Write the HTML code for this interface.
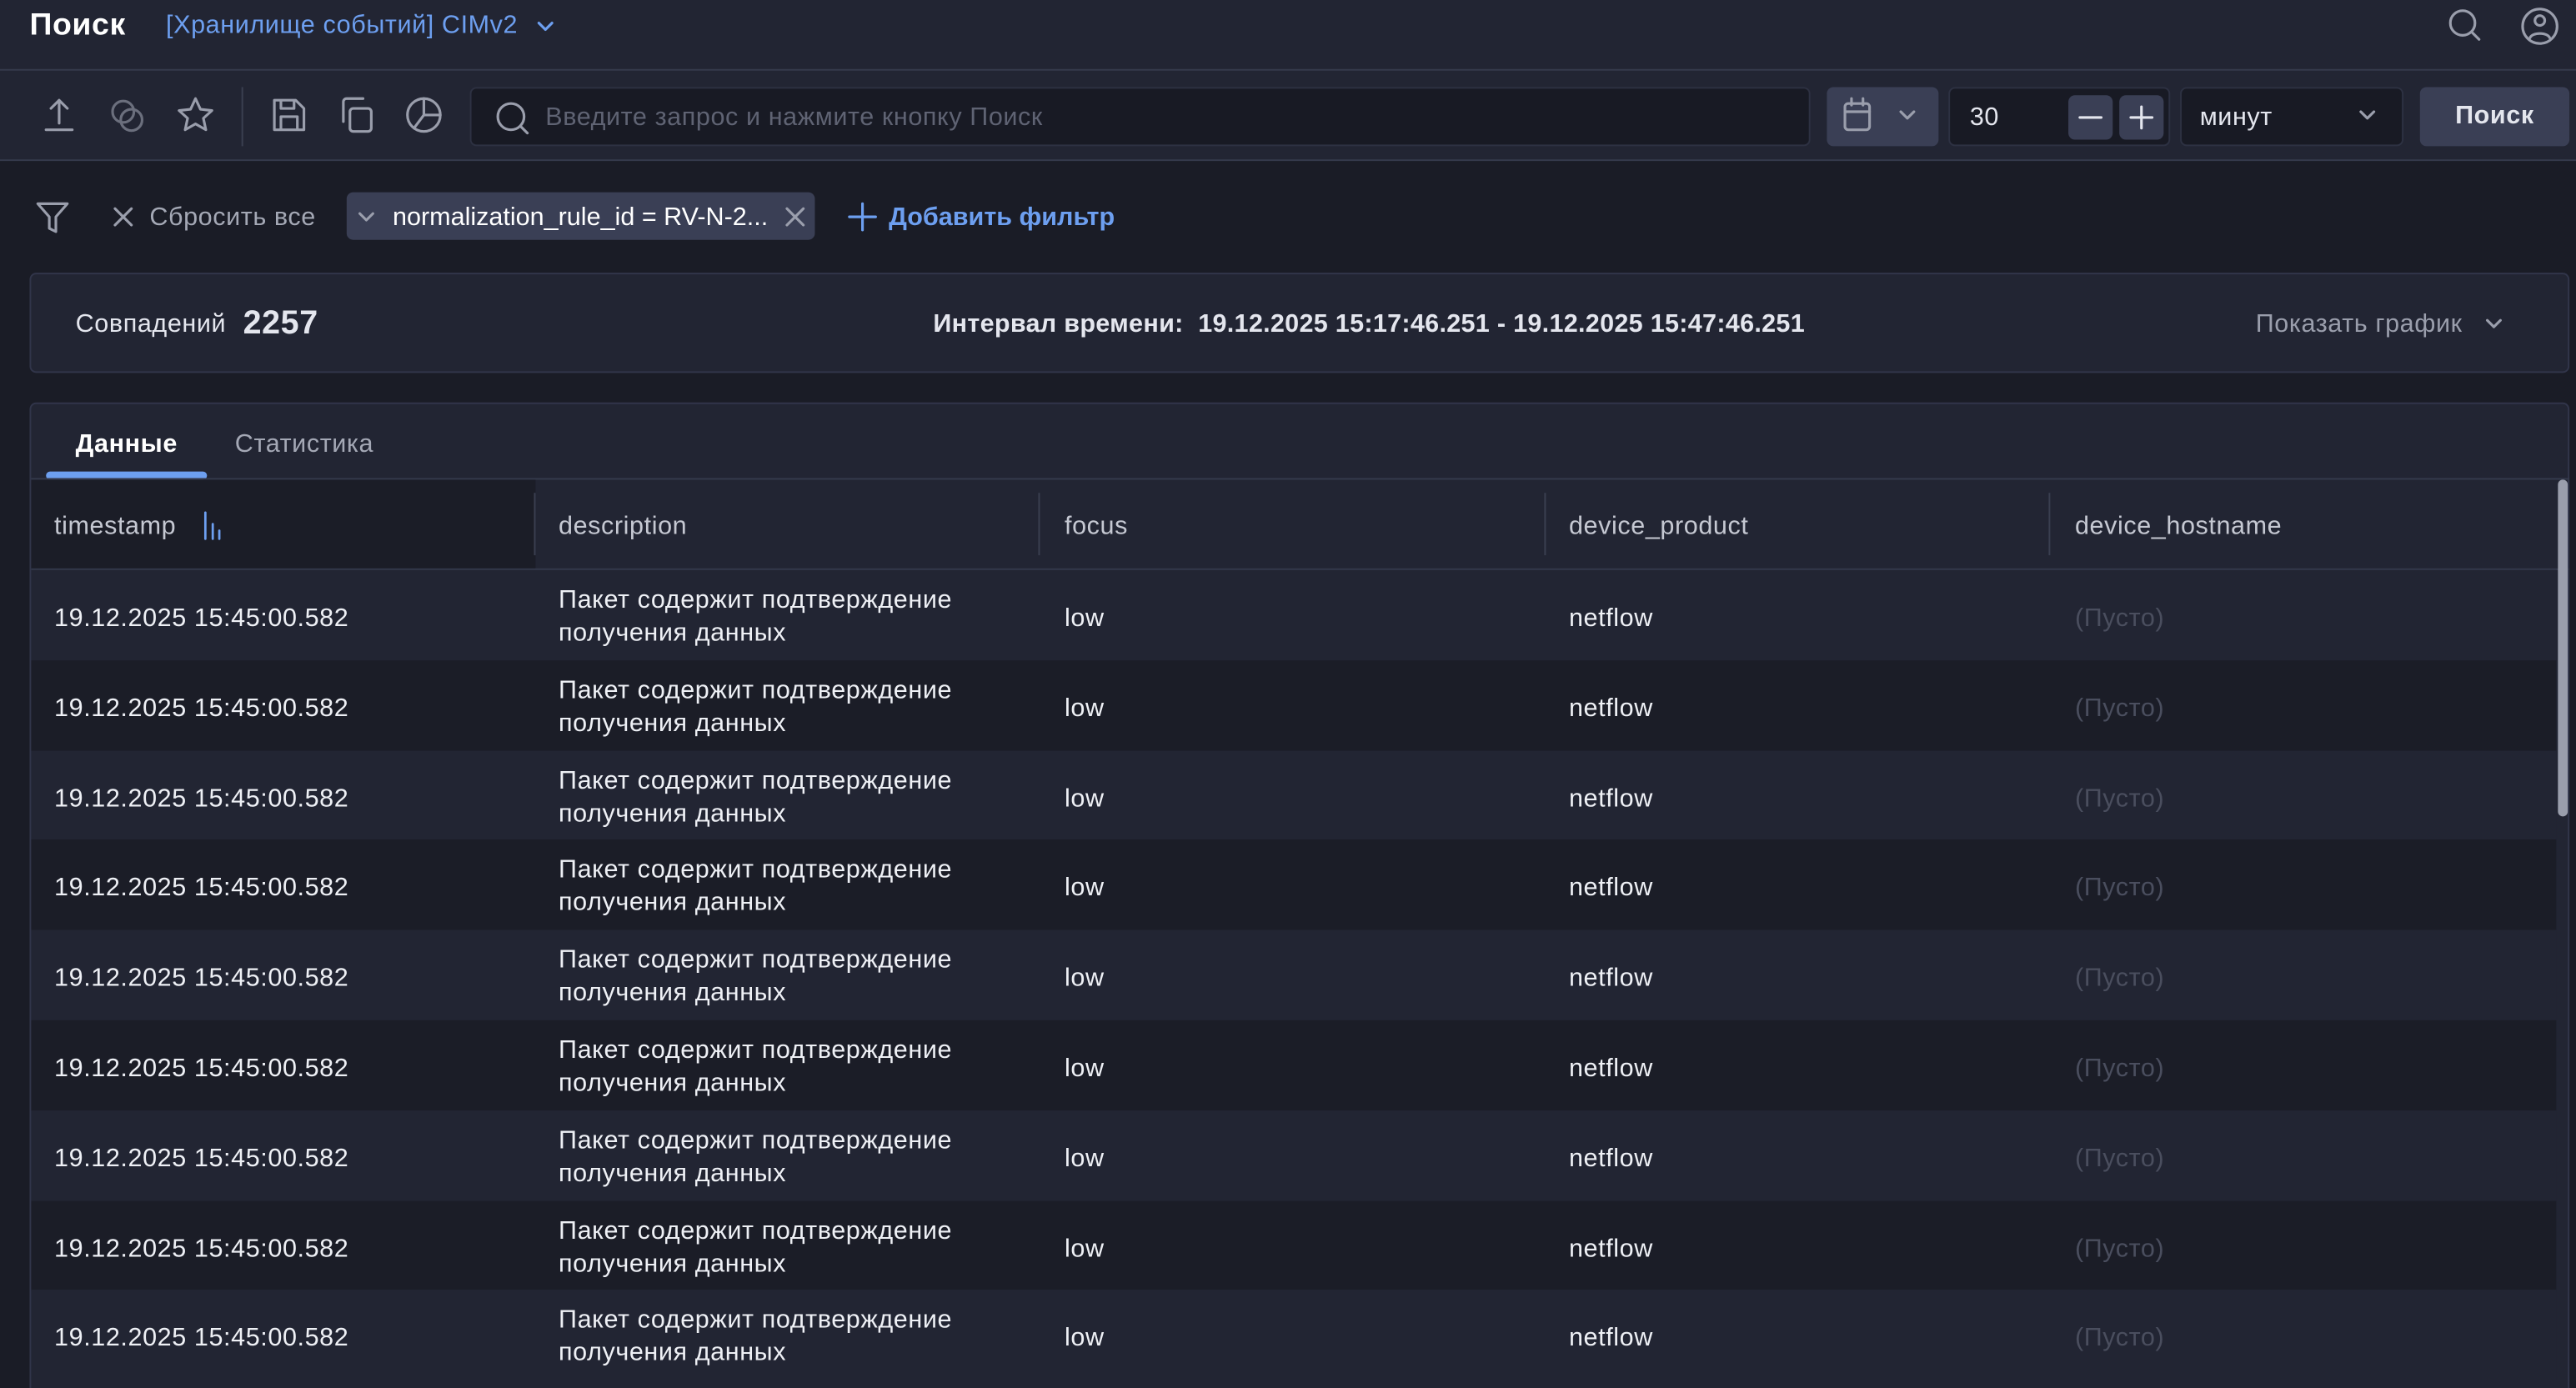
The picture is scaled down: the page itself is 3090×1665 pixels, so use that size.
<!DOCTYPE html>
<html><head><meta charset="utf-8"><style>
*{box-sizing:border-box;margin:0;padding:0}
html,body{width:3090px;height:1665px;overflow:hidden;background:#1a1c26}
#r{width:1568px;height:845px;transform:scale(1.97066);transform-origin:0 0;position:relative;font-family:"Liberation Sans",sans-serif;color:#e4e6ee;font-size:15px;background:#1a1c26;letter-spacing:0.3px}
.a{position:absolute}
.top{left:0;top:0;width:1568px;height:97px;background:#222533}
.ln{height:1px;background:#353a4c;left:0;width:1568px}
svg{position:absolute;fill:none;stroke:#9a9eac;stroke-width:1.6;stroke-linecap:round;stroke-linejoin:round}
.btn{background:#3a3f55;border-radius:4px}
.inp{background:#181a24;border:1px solid #2d3142;border-radius:4px}
.row{left:19px;width:1537px;height:55px}
.c{position:absolute;font-size:15.5px;color:#eef0f5}
</style></head><body><div id="r">
<div class="a top"></div>
<div class="a ln" style="top:42px"></div>
<div class="a ln" style="top:97px"></div>
<div class="a" style="left:18px;top:5px;font-size:19px;font-weight:bold;color:#fff">Поиск</div>
<div class="a" style="left:101px;top:7px;font-size:15.5px;color:#6d9ff0">[Хранилище событий] CIMv2</div>
<svg style="left:325px;top:10px" width="14" height="12"><path d="M3 4l4 4 4-4" stroke="#6d9ff0"/></svg>
<svg style="left:1489px;top:4px" width="24" height="24"><circle cx="10" cy="10" r="7.5"/><path d="M16 16l4 4"/></svg>
<svg style="left:1533px;top:3px" width="26" height="26"><circle cx="13" cy="13" r="10.5"/><circle cx="13" cy="9.5" r="3"/><path d="M7 20c1.5-3.5 10.5-3.5 12 0"/></svg>
<svg style="left:24px;top:58px" width="24" height="24"><path d="M12 3v14M7 8l5-5 5 5M4 21h16"/></svg>
<svg style="left:65px;top:58px" width="26" height="26"><circle cx="10" cy="10" r="6.5" stroke="#6b6f7d"/><circle cx="15" cy="15" r="6.5" stroke="#6b6f7d"/></svg>
<svg style="left:106px;top:57px" width="26" height="26"><path d="M13 3l3 6.5 7 .8-5.2 4.7 1.5 7-6.3-3.6-6.3 3.6 1.5-7L3 10.3l7-.8z"/></svg>
<div class="a" style="left:147px;top:53px;width:1px;height:36px;background:#3a3f50"></div>
<svg style="left:163px;top:57px" width="26" height="26"><path d="M4 4h13l5 5v13H4zM8 4v5h8V4M8 22v-8h10v8"/></svg>
<svg style="left:204px;top:57px" width="26" height="26"><rect x="9" y="9" width="13" height="14" rx="2"/><path d="M5 17V5a2 2 0 012-2h10"/></svg>
<svg style="left:245px;top:57px" width="26" height="26"><circle cx="13" cy="13" r="10"/><path d="M13 3v10h10M13 13l-6 8"/></svg>
<div class="a inp" style="left:286px;top:53px;width:816px;height:36px"></div>
<svg style="left:299px;top:59px" width="26" height="26"><circle cx="12" cy="12" r="8"/><path d="M18 18l4 4"/></svg>
<div class="a" style="left:332px;top:63px;color:#5f6373;font-size:15.5px">Введите запрос и нажмите кнопку Поиск</div>
<div class="a btn" style="left:1112px;top:53px;width:68px;height:36px"></div>
<svg style="left:1119px;top:58px" width="24" height="24"><rect x="4" y="5" width="15" height="16" rx="2"/><path d="M8 2v4M15 2v4M4 10h15"/></svg>
<svg style="left:1154px;top:64px" width="14" height="12"><path d="M3 4l4 4 4-4"/></svg>
<div class="a inp" style="left:1186px;top:53px;width:135px;height:36px"></div>
<div class="a" style="left:1199px;top:63px;font-size:15.5px">30</div>
<div class="a btn" style="left:1259px;top:58px;width:27px;height:27px"></div>
<div class="a btn" style="left:1290px;top:58px;width:27px;height:27px"></div>
<svg style="left:1259px;top:58px" width="27" height="27"><path d="M7 13.5h13" stroke="#e4e6ee"/></svg>
<svg style="left:1290px;top:58px" width="27" height="27"><path d="M7 13.5h13M13.5 7v13" stroke="#e4e6ee"/></svg>
<div class="a inp" style="left:1327px;top:53px;width:136px;height:36px"></div>
<div class="a" style="left:1339px;top:63px;font-size:15.5px">минут</div>
<svg style="left:1434px;top:64px" width="14" height="12"><path d="M3 4l4 4 4-4"/></svg>
<div class="a btn" style="left:1473px;top:53px;width:91px;height:36px"></div>
<div class="a" style="left:1473px;top:62px;width:91px;text-align:center;font-weight:bold;font-size:15.5px">Поиск</div>
<svg style="left:20px;top:120px" width="24" height="24"><path d="M3 4h18l-7 8v9l-4-2v-7z"/></svg>
<svg style="left:67px;top:124px" width="16" height="16"><path d="M3 3l10 10M13 3L3 13"/></svg>
<div class="a" style="left:91px;top:124px;color:#a4a8b5;font-size:15.5px">Сбросить все</div>
<div class="a" style="left:211px;top:117px;width:285px;height:29px;background:#3a3f55;border-radius:4px"></div>
<svg style="left:216px;top:126px" width="14" height="12"><path d="M3 4l4 4 4-4"/></svg>
<div class="a" style="left:239px;top:124px;font-size:15.5px;color:#fff;letter-spacing:0">normalization_rule_id = RV-N-2...</div>
<svg style="left:476px;top:124px" width="16" height="16"><path d="M3 3l10 10M13 3L3 13"/></svg>
<svg style="left:515px;top:122px" width="20" height="20"><path d="M10 2v16M2 10h16" stroke="#6d9ff0"/></svg>
<div class="a" style="left:541px;top:124px;color:#6d9ff0;font-weight:bold;font-size:15.5px;letter-spacing:0">Добавить фильтр</div>
<div class="a" style="left:18px;top:166px;width:1546px;height:61px;background:#222533;border:1px solid #31354a;border-radius:4px"></div>
<div class="a" style="left:46px;top:189px;font-size:15.5px">Совпадений</div>
<div class="a" style="left:148px;top:186px;font-size:20px;font-weight:bold">2257</div>
<div class="a" style="left:568px;top:189px;font-size:15.5px;font-weight:bold;letter-spacing:0.15px">Интервал времени:&nbsp; 19.12.2025 15:17:46.251 - 19.12.2025 15:47:46.251</div>
<div class="a" style="left:1373px;top:189px;font-size:15.5px;color:#9a9eac">Показать график</div>
<svg style="left:1511px;top:191px" width="14" height="12"><path d="M3 4l4 4 4-4"/></svg>
<div class="a" style="left:18px;top:245px;width:1546px;height:610px;background:#222533;border:1px solid #31354a;border-radius:4px"></div>
<div class="a" style="left:46px;top:262px;font-size:15.5px;font-weight:bold;color:#fff">Данные</div>
<div class="a" style="left:143px;top:262px;font-size:15.5px;color:#a4a8b5">Статистика</div>
<div class="a" style="left:28px;top:287px;width:98px;height:5px;background:#6d9ff0;border-radius:3px"></div>
<div class="a" style="left:19px;top:291px;width:1545px;height:1px;background:#353a4c"></div>
<div class="a" style="left:19px;top:292px;width:307px;height:55px;background:#1b1d27"></div>
<div class="a" style="left:19px;top:346px;width:1545px;height:1px;background:#353a4c"></div>
<div class="a" style="left:325px;top:300px;width:1px;height:38px;background:#3a3f50"></div>
<div class="a" style="left:632px;top:300px;width:1px;height:38px;background:#3a3f50"></div>
<div class="a" style="left:940px;top:300px;width:1px;height:38px;background:#3a3f50"></div>
<div class="a" style="left:1247px;top:300px;width:1px;height:38px;background:#3a3f50"></div>
<div class="c" style="left:33px;top:312px;color:#c5c8d2">timestamp</div>
<svg style="left:122px;top:311px" width="18" height="18"><path d="M3 1v16M7.5 8v9M11.5 12v5" stroke="#6d9ff0" stroke-width="1.4"/></svg>
<div class="c" style="left:340px;top:312px;color:#c5c8d2">description</div>
<div class="c" style="left:648px;top:312px;color:#c5c8d2">focus</div>
<div class="c" style="left:955px;top:312px;color:#c5c8d2">device_product</div>
<div class="c" style="left:1263px;top:312px;color:#c5c8d2">device_hostname</div>
<div class="a" style="left:1557px;top:292px;width:6px;height:205px;background:#9a9eac;border-radius:3px"></div>
<div id="rows"></div>
<script>
var h='';for(var i=0;i<9;i++){var t=347+i*54.8;var bg=i%2?'#1b1d27':'#222533';
h+='<div class="a row" style="top:'+t+'px;background:'+bg+'"></div>'+
'<div class="c" style="left:33px;top:'+(t+21)+'px">19.12.2025 15:45:00.582</div>'+
'<div class="c" style="left:340px;top:'+(t+9)+'px;line-height:20px">Пакет содержит подтверждение<br>получения данных</div>'+
'<div class="c" style="left:648px;top:'+(t+21)+'px">low</div>'+
'<div class="c" style="left:955px;top:'+(t+21)+'px">netflow</div>'+
'<div class="c" style="left:1263px;top:'+(t+21)+'px;color:#4a4e5e">(Пусто)</div>';}
document.getElementById('rows').innerHTML=h;
</script>
</div></body></html>
